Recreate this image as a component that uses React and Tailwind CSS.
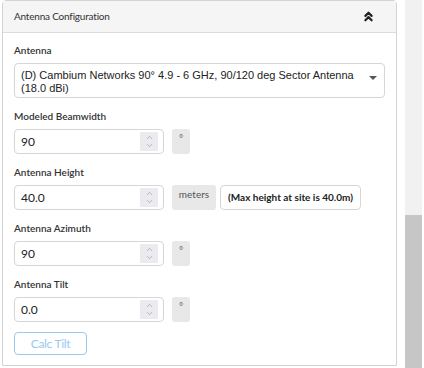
import { ChevronsUp, ChevronUp, ChevronDown } from "lucide-react";

function Spinner() {
  return (
    <div className="flex h-[19px] w-[18px] flex-col items-center justify-center bg-[#ebebef] text-[#8a8a96]">
      <ChevronUp size={9} strokeWidth={1.5} className="-mb-[1px]" />
      <ChevronDown size={9} strokeWidth={1.5} />
    </div>
  );
}

function NumberField({ value }) {
  return (
    <div className="flex h-[25px] w-[150px] items-center rounded-[4px] border border-[#d6d6d6] bg-white pl-[6px] pr-[5px]">
      <span className="flex-1 text-[12px] text-[#222]">{value}</span>
      <Spinner />
    </div>
  );
}

function Degree() {
  return (
    <div className="flex h-[25px] w-[18px] justify-center rounded-[3px] bg-[#e8e8e8] pt-[5px] text-[9px] leading-none text-[#555]">
      °
    </div>
  );
}

function Label({ children }) {
  return <div className="mb-[6px] h-[14px] text-[10px] font-semibold leading-[14px] text-[#333]">{children}</div>;
}

export default function App() {
  return (
    <div className="flex h-[368px] w-[424px] bg-white" style={{ fontFamily: "Lato, 'Noto Sans', sans-serif" }}>
      <div className="ml-[2px] h-[366px] w-[395px] rounded-t-[4px] border border-[#d3d3d3]">
        <div className="flex h-[32px] items-center justify-between border-b border-[#dcdcdc] bg-[#f5f5f5] pl-[11px] pr-[20px]">
          <span className="text-[10px] tracking-[-0.2px] text-[#333]">Antenna Configuration</span>
          <ChevronsUp size={15} strokeWidth={3.5} className="text-[#222]" />
        </div>
        <div className="px-[11px] pt-[10px]">
          <Label>Antenna</Label>
          <div className="flex h-[35px] w-[371px] items-start rounded-[4px] border border-[#d6d6d6] pl-[6px] pr-[7px] pt-[5px]">
            <div
              className="flex-1 whitespace-nowrap text-[11px] leading-[13px] text-[#222]"
              style={{ fontFamily: "'Liberation Sans', Arial, sans-serif" }}
            >
              (D) Cambium Networks 90° 4.9 - 6 GHz, 90/120 deg Sector Antenna
              <br />
              (18.0 dBi)
            </div>
            <div className="mt-[7px] h-0 w-0 border-x-[4px] border-t-[4px] border-x-transparent border-t-[#555]" />
          </div>

          <div className="mt-[11px]">
            <Label>Modeled Beamwidth</Label>
            <div className="flex gap-[8px]">
              <NumberField value="90" />
              <Degree />
            </div>
          </div>

          <div className="mt-[11px]">
            <Label>Antenna Height</Label>
            <div className="flex">
              <NumberField value="40.0" />
              <div className="ml-[8px] flex h-[25px] w-[44px] justify-center rounded-[3px] bg-[#e8e8e8] pt-[3px] text-[10px] leading-[12px] text-[#555]">
                meters
              </div>
              <div className="ml-[4px] flex h-[25px] w-[141px] items-center justify-center rounded-[4px] border border-[#d6d6d6] text-[10px] font-bold text-[#222]">
                (Max height at site is 40.0m)
              </div>
            </div>
          </div>

          <div className="mt-[11px]">
            <Label>Antenna Azimuth</Label>
            <div className="flex gap-[8px]">
              <NumberField value="90" />
              <Degree />
            </div>
          </div>

          <div className="mt-[11px]">
            <Label>Antenna Tilt</Label>
            <div className="flex gap-[8px]">
              <NumberField value="0.0" />
              <Degree />
            </div>
          </div>

          <button className="mt-[10px] flex h-[23px] w-[73px] items-center justify-center rounded-[4px] border border-[#98c9ef] text-[12px] tracking-[-0.3px] text-[#98c9ef]">
            Calc Tilt
          </button>
        </div>
      </div>
      <div className="ml-[8px] flex h-[368px] w-[17px] flex-col bg-[#f1f1f1]">
        <div className="mt-[215px] flex-1 bg-[#c6c6c6]" />
      </div>
    </div>
  );
}
